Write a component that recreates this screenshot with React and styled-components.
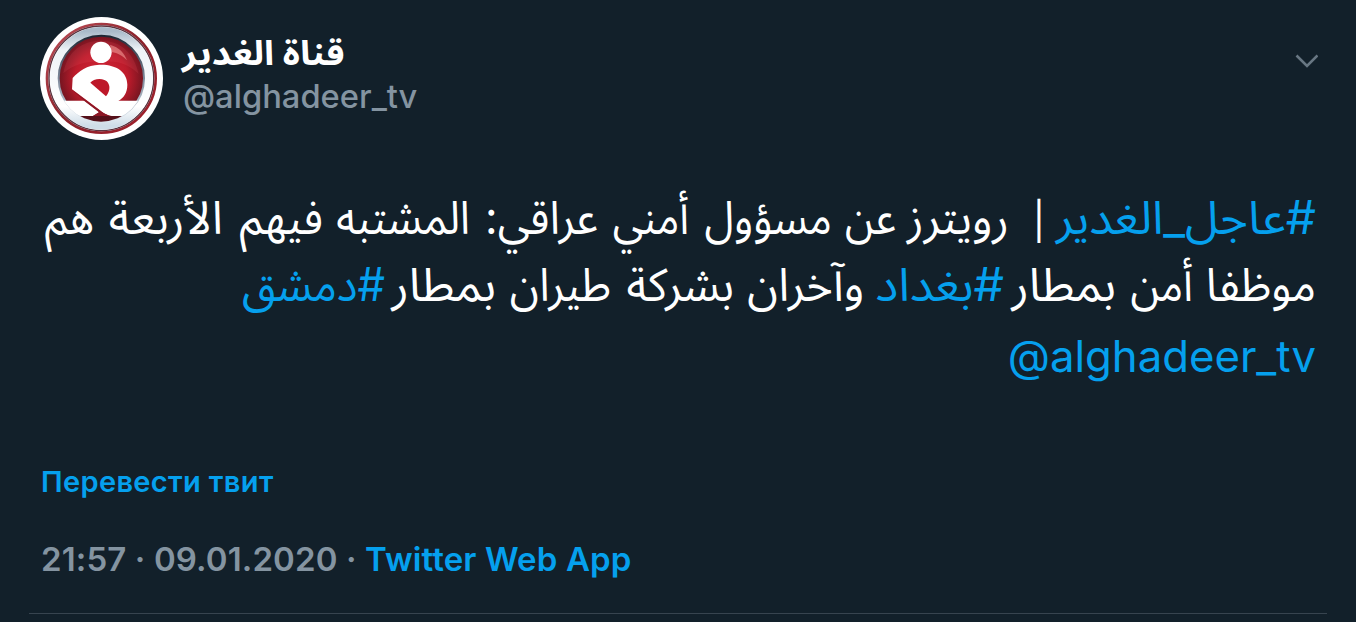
import React from "react";
import styled, { createGlobalStyle } from "styled-components";

const Global = createGlobalStyle`
  *, *::before, *::after { box-sizing: border-box; }
  html, body { margin: 0; background: #12202a; }
  body { overflow: hidden; }
`;

const latin = `Inter, "Liberation Sans", sans-serif`;
const arabic = `Inter, "Noto Sans Arabic", "DejaVu Sans", sans-serif`;

const Tweet = styled.article`
  width: 1356px;
  height: 622px;
  padding: 17px 29px 0;
  background: #12202a;
  color: #fff;
  font-family: ${latin};
  display: flex;
  flex-direction: column;
`;

const Header = styled.header`
  display: flex;
  align-items: flex-start;
  height: 123px;
  padding: 0 9px 0 11px;
`;

const Avatar = styled.svg`
  width: 123px;
  height: 123px;
  flex: none;
`;

const Names = styled.div`
  margin-left: 19px;
  padding-top: 12px;
  flex: 1;
  display: flex;
  flex-direction: column;
  align-items: flex-start;
`;

const Name = styled.div`
  height: 48px;
  line-height: 48px;
  font-family: ${arabic};
  font-size: 34px;
  font-weight: 700;
  white-space: nowrap;
  transform-origin: 0 50%;
  transform: scaleX(1.082);
`;

const Handle = styled.div`
  height: 38px;
  line-height: 38px;
  padding-left: 1px;
  font-size: 32.7px;
  font-weight: 500;
  color: #8494a1;
`;

const Chevron = styled.svg`
  width: 24px;
  height: 16px;
  margin-top: 36px;
`;

const Body = styled.div`
  margin-top: 44px;
  padding: 0 11px;
  height: 216px;
  display: flex;
  flex-direction: column;
  align-items: flex-start;
`;

const Line = styled.div`
  height: 67px;
  line-height: 67px;
  font-family: ${arabic};
  font-size: 46px;
  white-space: pre;
`;

const Word = styled.span`
  display: inline-block;
  width: ${(p) => p.$w}px;
  color: ${(p) => (p.$link ? "#05a0ee" : "#fff")};
  font-size: ${(p) => p.$size || 46}px;
  transform-origin: 100% 50%;
  transform: scaleX(${(p) => p.$fit});
`;

const Mention = styled.div`
  margin-top: 5px;
  height: 68px;
  line-height: 68px;
  font-size: 43.7px;
  color: #05a0ee;
`;

const Translate = styled.div`
  margin-top: 62px;
  padding-left: 12px;
  height: 40px;
  line-height: 40px;
  font-size: 29px;
  font-weight: 600;
  letter-spacing: 0.35px;
  color: #05a0ee;
`;

const Meta = styled.div`
  margin-top: 35px;
  padding-left: 12px;
  height: 44px;
  line-height: 44px;
  font-size: 33px;
  font-weight: 600;
  letter-spacing: 0.12px;
  color: #8494a1;
  white-space: pre;
`;

const Source = styled.span`
  color: #05a0ee;
`;

const Divider = styled.div`
  margin-top: 32px;
  height: 1px;
  flex: none;
  background: #37444f;
`;

const lines = [
  [
    { text: "#عاجل_الغدير", w: 258, fit: 1.037, link: true },
    { text: "|", w: 10, fit: 1, size: 37 },
    { text: "", w: 0, fit: 1 },
    { text: "رويترز", w: 100, fit: 0.986 },
    { text: "عن", w: 51, fit: 0.9 },
    { text: "مسؤول", w: 130, fit: 0.928 },
    { text: "أمني", w: 78, fit: 0.9 },
    { text: "عراقي:", w: 116, fit: 0.95 },
    { text: "المشتبه", w: 134, fit: 0.93 },
    { text: "فيهم", w: 87, fit: 0.957 },
    { text: "الأربعة", w: 116, fit: 1.02 },
    { text: "هم", w: 50, fit: 0.937 },
  ],
  [
    { text: "موظفا", w: 110, fit: 0.975 },
    { text: "أمن", w: 64, fit: 0.913 },
    { text: "بمطار", w: 99, fit: 1.025 },
    { text: "#بغداد", w: 127, fit: 1.048, link: true },
    { text: "وآخران", w: 117, fit: 0.99 },
    { text: "بشركة", w: 110, fit: 0.985 },
    { text: "طيران", w: 102, fit: 0.94 },
    { text: "بمطار", w: 99, fit: 1.025 },
    { text: "#دمشق", w: 142, fit: 0.944, link: true },
  ],
];

function ChannelLogo() {
  return (
    <Avatar viewBox="30 21 369 369">
      <defs>
        <radialGradient id="ball" cx="0.5" cy="0.5" r="0.52">
          <stop offset="0" stopColor="#d5293a" />
          <stop offset="0.6" stopColor="#bd1b2b" />
          <stop offset="1" stopColor="#6a141f" />
        </radialGradient>
        <linearGradient id="tube" x1="0" y1="0" x2="0" y2="1">
          <stop offset="0" stopColor="#a9bac9" />
          <stop offset="0.2" stopColor="#eef3f7" />
          <stop offset="0.8" stopColor="#ffffff" />
          <stop offset="1" stopColor="#cfdde8" />
        </linearGradient>
        <linearGradient id="shade" x1="0" y1="0" x2="0" y2="1">
          <stop offset="0" stopColor="#1e2734" />
          <stop offset="0.5" stopColor="#7b8799" />
          <stop offset="1" stopColor="#dde6ee" />
        </linearGradient>
        <linearGradient id="ring" x1="0" y1="0" x2="1" y2="1">
          <stop offset="0" stopColor="#c0525b" />
          <stop offset="0.5" stopColor="#8b2029" />
          <stop offset="1" stopColor="#a3202c" />
        </linearGradient>
        <clipPath id="disc"><circle cx="213" cy="205" r="130" /></clipPath>
      </defs>
      <circle cx="214.500" cy="205.500" r="184.500" fill="#fff" />
      <circle cx="214" cy="205" r="163" fill="#fff" stroke="url(#ring)" strokeWidth="8" />
      <circle cx="214" cy="205" r="157" fill="#fff" stroke="#5b3440" strokeWidth="4" />
      <circle cx="214" cy="205" r="141" fill="none" stroke="url(#tube)" strokeWidth="26" />
      <circle cx="214" cy="205" r="128" fill="url(#ball)" stroke="url(#shade)" strokeWidth="6" />
      <g clipPath="url(#disc)">
        <path d="M100 190C112 120 160 92 213 92c64 0 100 42 113 100-32-30-58-38-108-38-54 0-88 10-118 36z" fill="#f0606a" opacity=".15" />
        <path d="M240 104c28 8 43 25 51 47-15-15-28-22-46-25z" fill="#ffb0a8" opacity=".5" />
        <path d="M130 318h162c-42 25-120 25-162 0z" fill="#55101a" />
        <path d="M80 272H164L208 306L190 318H118L80 290z" fill="#fff" />
        <path d="M128 204C146 184 171 165 208 164C257 162 292 185 292 224C292 248 281 264 265 272H350V300L300 318H245C230 317 218 309 206 298L126 238Z" fill="#fff" />
        <path d="M181 218C190 204 224 202 234 218C242 231 238 246 228 259Z" fill="#bd1829" />
        <path d="M124 238L208 300Q220 311 240 318H188L207 307L162 272Z" fill="#8d1725" />
      </g>
      <circle cx="213" cy="127" r="32" fill="#fff" />
    </Avatar>
  );
}

export default function App() {
  return (
    <>
      <Global />
      <Tweet>
        <Header>
          <ChannelLogo />
          <Names>
            <Name dir="rtl">قناة الغدير</Name>
            <Handle>@alghadeer_tv</Handle>
          </Names>
          <Chevron viewBox="0 0 24 16" fill="none" stroke="#687783" strokeWidth="2.600">
            <path d="M2.500 2.500 L13 13 L23.500 2.500" />
          </Chevron>
        </Header>
        <Body dir="rtl">
          {lines.map((words, row) => (
            <Line key={row}>
              {words.map((word, i) => (
                <React.Fragment key={i}>
                  {i > 0 && " "}
                  {word.text && (
                    <Word $w={word.w} $fit={word.fit} $link={word.link} $size={word.size}>
                      {word.text}
                    </Word>
                  )}
                </React.Fragment>
              ))}
            </Line>
          ))}
          <Mention dir="ltr">@alghadeer_tv</Mention>
        </Body>
        <Translate>Перевести твит</Translate>
        <Meta>21:57 · 09.01.2020 · <Source>Twitter Web App</Source></Meta>
        <Divider />
      </Tweet>
    </>
  );
}
